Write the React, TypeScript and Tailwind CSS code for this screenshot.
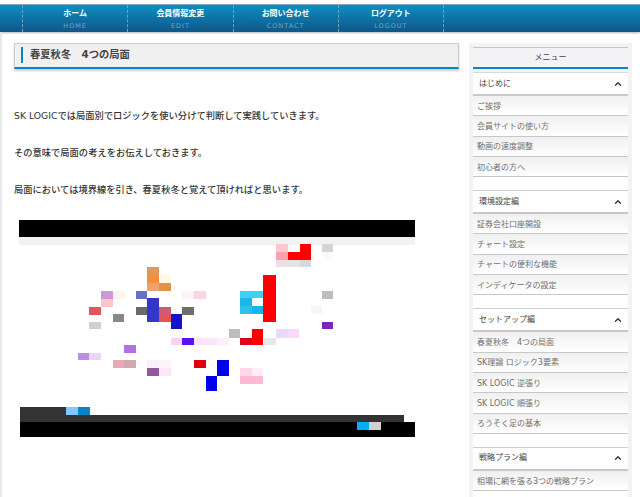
import { ChevronUp } from 'lucide-react';

const navItems = [
  { label: 'ホーム', sub: 'HOME' },
  { label: '会員情報変更', sub: 'EDIT' },
  { label: 'お問い合わせ', sub: 'CONTACT' },
  { label: 'ログアウト', sub: 'LOGOUT' },
];

const menuGroups = [
  { title: 'はじめに', items: ['ご挨拶', '会員サイトの使い方', '動画の速度調整', '初心者の方へ'] },
  { title: '環境設定編', items: ['証券会社口座開設', 'チャート設定', 'チャートの便利な機能', 'インディケータの設定'] },
  { title: 'セットアップ編', items: ['春夏秋冬　4つの局面', 'SK理論 ロジック3要素', 'SK LOGIC 逆張り', 'SK LOGIC 順張り', 'ろうそく足の基本'] },
  { title: '戦略プラン編', items: ['相場に網を張る3つの戦略プラン'] },
];

// x, y, w, h, colour: page coordinates of the mosaic blocks
const blocks: [number, number, number, number, string][] = [
  [19, 220, 396, 17, '#000000'],
  [19, 237, 396, 8, '#f2f2f2'],
  [147, 267, 12, 8, '#e2975a'],
  [147, 275, 12, 8, '#fb8f35'],
  [159, 275, 12, 8, '#fff6e6'],
  [147, 283, 12, 8, '#eaa46c'],
  [159, 283, 12, 8, '#e38f45'],
  [101, 291, 12, 8, '#cf97d6'],
  [113, 291, 12, 8, '#fff3ec'],
  [136, 291, 11, 8, '#6570c6'],
  [182, 291, 12, 8, '#fdf2fb'],
  [194, 291, 12, 8, '#fbd5df'],
  [101, 299, 12, 8, '#fdc5c9'],
  [89, 307, 12, 8, '#e0565c'],
  [136, 307, 11, 8, '#6a6a6a'],
  [147, 298, 12, 24, '#3535c8'],
  [159, 307, 12, 8, '#cf5a72'],
  [159, 315, 12, 7, '#e45454'],
  [182, 307, 12, 8, '#6d6d6d'],
  [171, 314, 11, 15, '#1414c8'],
  [113, 314, 11, 8, '#888888'],
  [89, 322, 12, 7, '#d0d0d0'],
  [276, 244, 12, 8, '#fdc8d0'],
  [276, 252, 12, 8, '#f9a0a8'],
  [288, 252, 12, 8, '#ff0000'],
  [300, 244, 11, 16, '#ff0000'],
  [322, 244, 11, 8, '#d4d4d4'],
  [322, 252, 11, 8, '#fafafa'],
  [276, 260, 12, 7, '#eee0e2'],
  [288, 260, 12, 7, '#e4e4e4'],
  [300, 260, 11, 7, '#d8d8d8'],
  [263, 275, 13, 47, '#ff0000'],
  [240, 291, 23, 7, '#3dd0f5'],
  [240, 298, 12, 8, '#1ab8e6'],
  [240, 306, 12, 8, '#2fc0e8'],
  [252, 306, 11, 8, '#10b8ee'],
  [322, 291, 11, 8, '#bdbdbd'],
  [311, 306, 11, 8, '#f6f6f6'],
  [322, 322, 11, 7, '#7a25c0'],
  [229, 329, 11, 9, '#bdbdbd'],
  [252, 329, 11, 16, '#ff0000'],
  [240, 338, 12, 7, '#e2001e'],
  [264, 338, 12, 7, '#e8e8e8'],
  [276, 329, 12, 9, '#ecd8fa'],
  [288, 329, 11, 9, '#fbd8f8'],
  [171, 338, 11, 7, '#fdd0f8'],
  [182, 338, 12, 7, '#5a10f8'],
  [194, 338, 23, 7, '#fde6fa'],
  [217, 338, 12, 7, '#fdeefa'],
  [124, 345, 12, 8, '#b070e8'],
  [78, 353, 11, 7, '#b890e0'],
  [89, 353, 12, 7, '#ead6f8'],
  [113, 360, 11, 8, '#e8a8b8'],
  [124, 360, 12, 8, '#d4a8b0'],
  [147, 360, 12, 8, '#fdeffa'],
  [159, 360, 12, 8, '#fff3fb'],
  [147, 368, 12, 8, '#905a98'],
  [159, 368, 12, 8, '#fde8fb'],
  [194, 360, 12, 8, '#e0000e'],
  [217, 360, 12, 16, '#0000f0'],
  [206, 376, 11, 15, '#0000f0'],
  [240, 368, 12, 8, '#fdd8e8'],
  [252, 368, 11, 8, '#fdeef5'],
  [240, 376, 23, 8, '#ffb8d4'],
  [20, 407, 46, 15, '#333333'],
  [66, 407, 12, 8, '#80c8ff'],
  [78, 407, 12, 8, '#0a84c8'],
  [66, 415, 338, 7, '#333333'],
  [20, 422, 395, 15, '#000000'],
  [357, 422, 12, 8, '#00b0f0'],
  [369, 422, 12, 8, '#d0d0d0'],
];

function Header() {
  return (
    <div className="mt-1 h-[28px] border-t border-[#7fa9bd] bg-gradient-to-b from-[#0a8fc4] to-[#0f5688] shadow-[0_1px_2px_rgba(0,0,0,0.3)]">
      <div className="ml-[22px] flex h-full border-l border-dashed border-[#6aa6c6]">
        {navItems.map((item) => (
          <div key={item.sub} className="flex w-[105.25px] flex-col items-center border-r border-dashed border-[#6aa6c6] pt-[3px]">
            <span className="text-[8px] font-bold leading-[11px] text-white">{item.label}</span>
            <span className="mt-[2px] text-[6.5px] leading-[10px] tracking-[1px] text-[#6ea6c4]">{item.sub}</span>
          </div>
        ))}
      </div>
    </div>
  );
}

function Article() {
  return (
    <div className="ml-[12px] w-[445px]">
      <div className="flex h-[26px] items-center border border-b-0 border-[#cccccc] bg-[#f0f0f0] pb-[1px] pl-[6px] shadow-[0_2px_2px_rgba(0,0,0,0.2)] [border-bottom:2px_solid_#0a86c4]">
        <span className="h-[16px] w-[2px] bg-[#0a86c4]" />
        <h1 className="ml-[7px] text-[10.3px] font-bold text-[#444444]">春夏秋冬　4つの局面</h1>
      </div>
      <div className="mt-[40px] flex flex-col gap-[23px] text-[9.28px] leading-[14px] text-[#333333]">
        <p className="font-medium">SK LOGICでは局面別でロジックを使い分けて判断して実践していきます。</p>
        <p className="font-medium">その意味で局面の考えをお伝えしておきます。</p>
        <p className="font-medium">局面においては境界線を引き、春夏秋冬と覚えて頂ければと思います。</p>
      </div>
      <svg className="ml-[5px] mt-[23px] block" width="397" height="218" viewBox="19 220 397 218">
        {blocks.map(([x, y, w, h, color], i) => (
          <rect key={i} x={x} y={y} width={w} height={h} fill={color} />
        ))}
      </svg>
    </div>
  );
}

function Sidebar() {
  return (
    <div className="ml-[10px] h-[454px] w-[163px] overflow-hidden bg-[#f3f3f5] px-[4px] pt-[4px]">
      <div className="flex h-[22px] w-[155px] items-center justify-center border-t border-[#c4c4c4] text-[8px] text-[#444444] [border-bottom:2px_solid_#0a86c4]">
        メニュー
      </div>
      <div className="mt-[3px] w-[155px] border-t border-[#d8d8d8] bg-white">
        {menuGroups.map((group) => (
          <div key={group.title}>
            <div className="flex h-[23px] items-center justify-between pl-[6px] pr-[5px] text-[8px] text-[#444444] [border-bottom:2px_solid_#c8c8c8]">
              <span>{group.title}</span>
              <ChevronUp size={10} strokeWidth={3} className="text-[#333333]" />
            </div>
            {group.items.map((item) => (
              <div key={item} className="flex h-[20.3px] items-center border-b border-[#c8c8c8] bg-gradient-to-b from-[#f0f0f0] to-white pl-[4px] pt-[2px] text-[8px] text-[#707070]">
                {item}
              </div>
            ))}
            <div className="h-[14px] border-b border-[#d0d0d0] bg-white" />
          </div>
        ))}
      </div>
    </div>
  );
}

export default function App() {
  return (
    <div className="h-[497px] w-[640px] overflow-hidden bg-white font-['DejaVu_Sans','Noto_Sans_CJK_JP',sans-serif]">
      <Header />
      <div className="flex">
        <div className="w-[2px] shrink-0 bg-[#e8e8e8]" />
        <div className="flex pt-[11px]">
          <Article />
          <Sidebar />
        </div>
      </div>
    </div>
  );
}
